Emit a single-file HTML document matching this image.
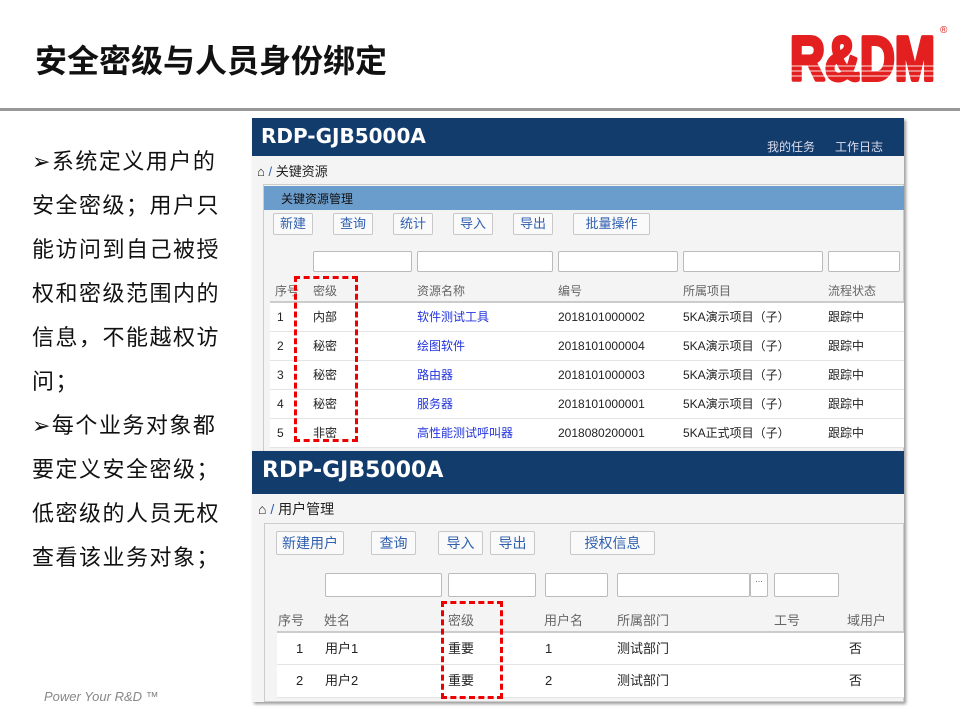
<!DOCTYPE html>
<html><head><meta charset="utf-8"><style>
*{margin:0;padding:0;box-sizing:border-box}
body{width:960px;height:720px;background:#fff;position:relative;overflow:hidden;font-family:"Liberation Sans","Noto Sans CJK SC",sans-serif}
.a{position:absolute;white-space:nowrap}
.t{font-size:13px;color:#222}
.h{font-size:12px;color:#666}
.btn{position:absolute;border:1px solid #c8c8c8;background:#fafafa;color:#3060b0;font-size:13px;text-align:center;border-radius:2px}
.inp{position:absolute;border:1px solid #bbb;background:#fff;border-radius:2px}
.lk{color:#2233dd}
.row{position:absolute;left:270px;width:634px;border-bottom:1px solid #e4e4e4;background:#fff}
</style></head><body>
<div class="a" style="left:35px;top:36px;font-size:32px;font-weight:bold;color:#111">安全密级与人员身份绑定</div>
<svg class="a" style="left:786px;top:26px" width="170" height="62"><text x="4" y="54" font-family="Liberation Sans" font-weight="bold" font-size="62" fill="#e3201f" stroke="#e3201f" stroke-width="4" stroke-linejoin="round" textLength="145" lengthAdjust="spacingAndGlyphs">R&amp;DM</text><g stroke="#fff" stroke-width="1.2" opacity="0.7"><line x1="0" y1="40" x2="170" y2="40"/><line x1="0" y1="45" x2="170" y2="45"/><line x1="0" y1="50" x2="170" y2="50"/></g></svg>
<div class="a" style="left:940px;top:25px;font-size:10px;color:#e3201f">®</div>
<div class="a" style="left:0;top:108px;width:960px;height:3px;background:#999"></div>
<div class="a" style="left:32px;top:140px;font-size:22px;line-height:44px;color:#111;letter-spacing:1.5px">➢系统定义用户的<br>安全密级；用户只<br>能访问到自己被授<br>权和密级范围内的<br>信息，不能越权访<br>问；<br>➢每个业务对象都<br>要定义安全密级；<br>低密级的人员无权<br>查看该业务对象；</div>
<div class="a" style="left:44px;top:689px;font-size:13px;font-style:italic;color:#888">Power Your R&amp;D ™</div>

<!-- screenshot 1 -->
<div class="a" style="left:252px;top:118px;width:652px;height:334px;background:#f4f4f4;box-shadow:2px 2px 3px #999"></div>
<div class="a" style="left:252px;top:118px;width:652px;height:38px;background:#123c6c"></div>
<div class="a" style="left:261px;top:124px;font-size:20px;font-weight:bold;color:#fff;font-family:'DejaVu Sans',sans-serif">RDP-GJB5000A</div>
<div class="a" style="left:767px;top:138px;font-size:12px;color:#dde">我的任务</div>
<div class="a" style="left:835px;top:138px;font-size:12px;color:#dde">工作日志</div>
<div class="a t" style="left:257px;top:161px">⌂ <span style="color:#3060b0">/</span> 关键资源</div>
<div class="a" style="left:263px;top:184px;width:641px;height:268px;border:1px solid #ccc;background:#f4f4f4"></div>
<div class="a" style="left:264px;top:186px;width:640px;height:24px;background:#6a9ccc"></div>
<div class="a" style="left:281px;top:190px;font-size:12px;color:#111">关键资源管理</div>
<div class="btn" style="left:273px;top:213px;width:40px;height:22px;line-height:20px">新建</div>
<div class="btn" style="left:333px;top:213px;width:40px;height:22px;line-height:20px">查询</div>
<div class="btn" style="left:393px;top:213px;width:40px;height:22px;line-height:20px">统计</div>
<div class="btn" style="left:453px;top:213px;width:40px;height:22px;line-height:20px">导入</div>
<div class="btn" style="left:513px;top:213px;width:40px;height:22px;line-height:20px">导出</div>
<div class="btn" style="left:573px;top:213px;width:77px;height:22px;line-height:20px">批量操作</div>
<div class="inp" style="left:313px;top:251px;width:99px;height:21px"></div>
<div class="inp" style="left:417px;top:251px;width:136px;height:21px"></div>
<div class="inp" style="left:558px;top:251px;width:120px;height:21px"></div>
<div class="inp" style="left:683px;top:251px;width:140px;height:21px"></div>
<div class="inp" style="left:828px;top:251px;width:72px;height:21px"></div>
<div class="a h" style="left:275px;top:282px">序号</div><div class="a h" style="left:313px;top:282px">密级</div><div class="a h" style="left:417px;top:282px">资源名称</div><div class="a h" style="left:558px;top:282px">编号</div><div class="a h" style="left:683px;top:282px">所属项目</div><div class="a h" style="left:828px;top:282px">流程状态</div>
<div class="a" style="left:270px;top:301px;width:634px;height:2px;background:#ccc"></div>
<div class="row" style="top:303px;height:29px"></div>
<div class="row" style="top:332px;height:29px"></div>
<div class="row" style="top:361px;height:29px"></div>
<div class="row" style="top:390px;height:29px"></div>
<div class="row" style="top:419px;height:29px"></div>
<div class="a t" style="left:277px;top:303px;font-size:12px;line-height:29px">1<br>2<br>3<br>4<br>5</div>
<div class="a t" style="left:313px;top:303px;font-size:12px;line-height:29px">内部<br>秘密<br>秘密<br>秘密<br>非密</div>
<div class="a lk" style="left:417px;top:303px;font-size:12px;line-height:29px">软件测试工具<br>绘图软件<br>路由器<br>服务器<br>高性能测试呼叫器</div>
<div class="a t" style="left:558px;top:303px;font-size:12px;line-height:29px">2018101000002<br>2018101000004<br>2018101000003<br>2018101000001<br>2018080200001</div>
<div class="a t" style="left:683px;top:303px;font-size:12px;line-height:29px">5KA演示项目（子）<br>5KA演示项目（子）<br>5KA演示项目（子）<br>5KA演示项目（子）<br>5KA正式项目（子）</div>
<div class="a t" style="left:828px;top:303px;font-size:12px;line-height:29px">跟踪中<br>跟踪中<br>跟踪中<br>跟踪中<br>跟踪中</div>
<div class="a" style="left:294px;top:276px;width:64px;height:166px;border:3px dashed #e00"></div>

<!-- screenshot 2 -->
<div class="a" style="left:252px;top:451px;width:652px;height:251px;background:#f4f4f4;box-shadow:2px 2px 3px #999"></div>
<div class="a" style="left:252px;top:451px;width:652px;height:43px;background:#123c6c"></div>
<div class="a" style="left:262px;top:458px;font-size:22px;font-weight:bold;color:#fff;font-family:'DejaVu Sans',sans-serif">RDP-GJB5000A</div>
<div class="a t" style="left:258px;top:499px;font-size:14px">⌂ <span style="color:#3060b0">/</span> 用户管理</div>
<div class="a" style="left:264px;top:523px;width:640px;height:179px;border:1px solid #ccc;background:#f4f4f4"></div>
<div class="btn" style="left:276px;top:531px;width:68px;height:24px;line-height:22px;font-size:14px">新建用户</div>
<div class="btn" style="left:371px;top:531px;width:45px;height:24px;line-height:22px;font-size:14px">查询</div>
<div class="btn" style="left:438px;top:531px;width:45px;height:24px;line-height:22px;font-size:14px">导入</div>
<div class="btn" style="left:490px;top:531px;width:45px;height:24px;line-height:22px;font-size:14px">导出</div>
<div class="btn" style="left:570px;top:531px;width:85px;height:24px;line-height:22px;font-size:14px">授权信息</div>
<div class="inp" style="left:325px;top:573px;width:117px;height:24px"></div>
<div class="inp" style="left:448px;top:573px;width:88px;height:24px"></div>
<div class="inp" style="left:545px;top:573px;width:63px;height:24px"></div>
<div class="inp" style="left:617px;top:573px;width:133px;height:24px"></div>
<div class="inp" style="left:750px;top:573px;width:18px;height:24px;font-size:9px;color:#666;text-align:center">...</div>
<div class="inp" style="left:774px;top:573px;width:65px;height:24px"></div>
<div class="a h" style="left:278px;top:610px;font-size:13px">序号</div><div class="a h" style="left:324px;top:610px;font-size:13px">姓名</div><div class="a h" style="left:448px;top:610px;font-size:13px">密级</div><div class="a h" style="left:544px;top:610px;font-size:13px">用户名</div><div class="a h" style="left:617px;top:610px;font-size:13px">所属部门</div><div class="a h" style="left:774px;top:610px;font-size:13px">工号</div><div class="a h" style="left:847px;top:610px;font-size:13px">域用户</div>
<div class="a" style="left:277px;top:631px;width:627px;height:2px;background:#ccc"></div>
<div class="a" style="left:277px;top:633px;width:627px;height:32px;background:#fff;border-bottom:1px solid #e4e4e4"></div>
<div class="a" style="left:277px;top:665px;width:627px;height:33px;background:#fff;border-bottom:1px solid #e4e4e4"></div>
<div class="a t" style="left:296px;top:633px;line-height:32px">1<br>2</div>
<div class="a t" style="left:325px;top:633px;line-height:32px">用户1<br>用户2</div>
<div class="a t" style="left:448px;top:633px;line-height:32px">重要<br>重要</div>
<div class="a t" style="left:545px;top:633px;line-height:32px">1<br>2</div>
<div class="a t" style="left:617px;top:633px;line-height:32px">测试部门<br>测试部门</div>
<div class="a t" style="left:849px;top:633px;line-height:32px">否<br>否</div>
<div class="a" style="left:441px;top:601px;width:62px;height:98px;border:3px dashed #e00"></div>
</body></html>
